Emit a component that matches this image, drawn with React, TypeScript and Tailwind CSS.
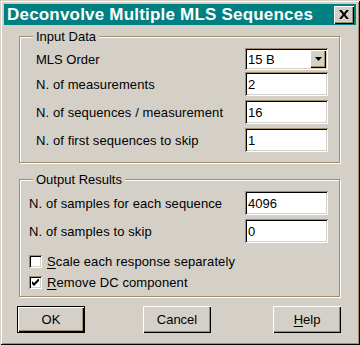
import React from "react";

const sunken =
  "shadow-[inset_1px_1px_0_#a08c6e,inset_-1px_-1px_0_#ffffff,inset_2px_2px_0_#000000,inset_-2px_-2px_0_#d4d0c8]";
const raised =
  "shadow-[inset_1px_1px_0_#ffffff,inset_-1px_-1px_0_#000000,inset_-2px_-2px_0_#a08c6e]";

function Field({ value }: { value: string }) {
  return (
    <div className={`w-[83px] h-[24px] bg-white ${sunken} flex items-center pl-[3px]`}>
      {value}
    </div>
  );
}

function Row({ label, value }: { label: string; value: string }) {
  return (
    <div className="flex items-center justify-between h-[24px]">
      <span className="tracking-[0.1px]">{label}</span>
      <Field value={value} />
    </div>
  );
}

function Group({
  title,
  children,
  className,
}: {
  title: string;
  children: React.ReactNode;
  className: string;
}) {
  return (
    <div
      className={`relative ml-[15px] w-[321px] border border-[#a08c6e] shadow-[1px_1px_0_#ffffff,inset_1px_1px_0_#ffffff] ${className}`}
    >
      <span className="absolute left-[13px] top-[-8px] bg-[#d4d0c8] px-[3px] leading-[15px]">
        {title}
      </span>
      {children}
    </div>
  );
}

function Check({ checked }: { checked: boolean }) {
  return (
    <div className={`w-[13px] h-[13px] bg-white ${sunken} flex items-center justify-center`}>
      {checked && (
        <svg width="7" height="7" viewBox="0 0 7 7">
          <path d="M0 2 L0 5 L2 7 L7 2 L7 -1 L2 4 Z" fill="#000" />
        </svg>
      )}
    </div>
  );
}

export default function App() {
  return (
    <div
      className="w-[360px] h-[345px] bg-[#d4d0c8] p-[4px] text-black text-[13px] leading-[15px] font-['Liberation_Sans',Arial,sans-serif] shadow-[inset_1px_1px_0_#d4d0c8,inset_-1px_-1px_0_#000000,inset_2px_2px_0_#ffffff,inset_-2px_-2px_0_#a08c6e]"
    >
      {/* Title bar */}
      <div className="h-[21px] bg-[#008080] flex items-center pl-[3px] pr-[2px]">
        <span className="flex-1 text-white font-bold text-[17px] tracking-[0.2px] leading-[21px] whitespace-nowrap">
          Deconvolve Multiple MLS Sequences
        </span>
        <div className={`w-[20px] h-[18px] bg-[#d4d0c8] ${raised} flex items-center justify-center`}>
          <svg width="10" height="9" viewBox="0 0 10 9">
            <path
              d="M0 0 H2.5 L5 3 L7.5 0 H10 L6.3 4.5 L10 9 H7.5 L5 6 L2.5 9 H0 L3.7 4.5 Z"
              fill="#000"
            />
          </svg>
        </div>
      </div>

      {/* Input Data */}
      <Group title="Input Data" className="mt-[11px] pt-[11px] pb-[10px] pl-[16px] pr-[11px]">
        <div className="flex items-center justify-between h-[22px]">
          <span>MLS Order</span>
          <div className={`w-[83px] h-[22px] bg-white ${sunken} flex items-center p-[2px]`}>
            <span className="flex-1 pl-[1px]">15 B</span>
            <div className={`w-[16px] h-[18px] bg-[#d4d0c8] ${raised} flex items-center justify-center`}>
              <svg width="7" height="4" viewBox="0 0 7 4">
                <path d="M0 0 H7 L3.5 4 Z" fill="#000" />
              </svg>
            </div>
          </div>
        </div>
        <div className="mt-[2px] flex flex-col gap-[4px]">
          <Row label="N. of measurements" value="2" />
          <Row label="N. of sequences / measurement" value="16" />
          <Row label="N. of first sequences to skip" value="1" />
        </div>
      </Group>

      {/* Output Results */}
      <Group title="Output Results" className="mt-[16px] pt-[11px] pb-[6px] pl-[9px] pr-[11px]">
        <div className="flex flex-col gap-[4px]">
          <Row label="N. of samples for each sequence" value="4096" />
          <Row label="N. of samples to skip" value="0" />
        </div>
        <div className="mt-[11px] flex items-center gap-[5px] h-[15px]">
          <Check checked={false} />
          <span className="tracking-[0.1px]">
            <span className="underline underline-offset-2">S</span>cale each response separately
          </span>
        </div>
        <div className="mt-[6px] flex items-center gap-[5px] h-[15px]">
          <Check checked={true} />
          <span className="tracking-[0.1px]">
            <span className="underline underline-offset-2">R</span>emove DC component
          </span>
        </div>
      </Group>

      {/* Buttons */}
      <div className="mt-[9px] flex">
        <div className="ml-[13px] w-[68px] h-[27px] border border-black">
          <div className={`w-full h-full ${raised} flex items-center justify-center`}>OK</div>
        </div>
        <div className={`ml-[58px] w-[68px] h-[27px] ${raised} flex items-center justify-center`}>
          Cancel
        </div>
        <div className={`ml-[62px] w-[68px] h-[27px] ${raised} flex items-center justify-center`}>
          <span>
            <span className="underline underline-offset-2">H</span>elp
          </span>
        </div>
      </div>
    </div>
  );
}
